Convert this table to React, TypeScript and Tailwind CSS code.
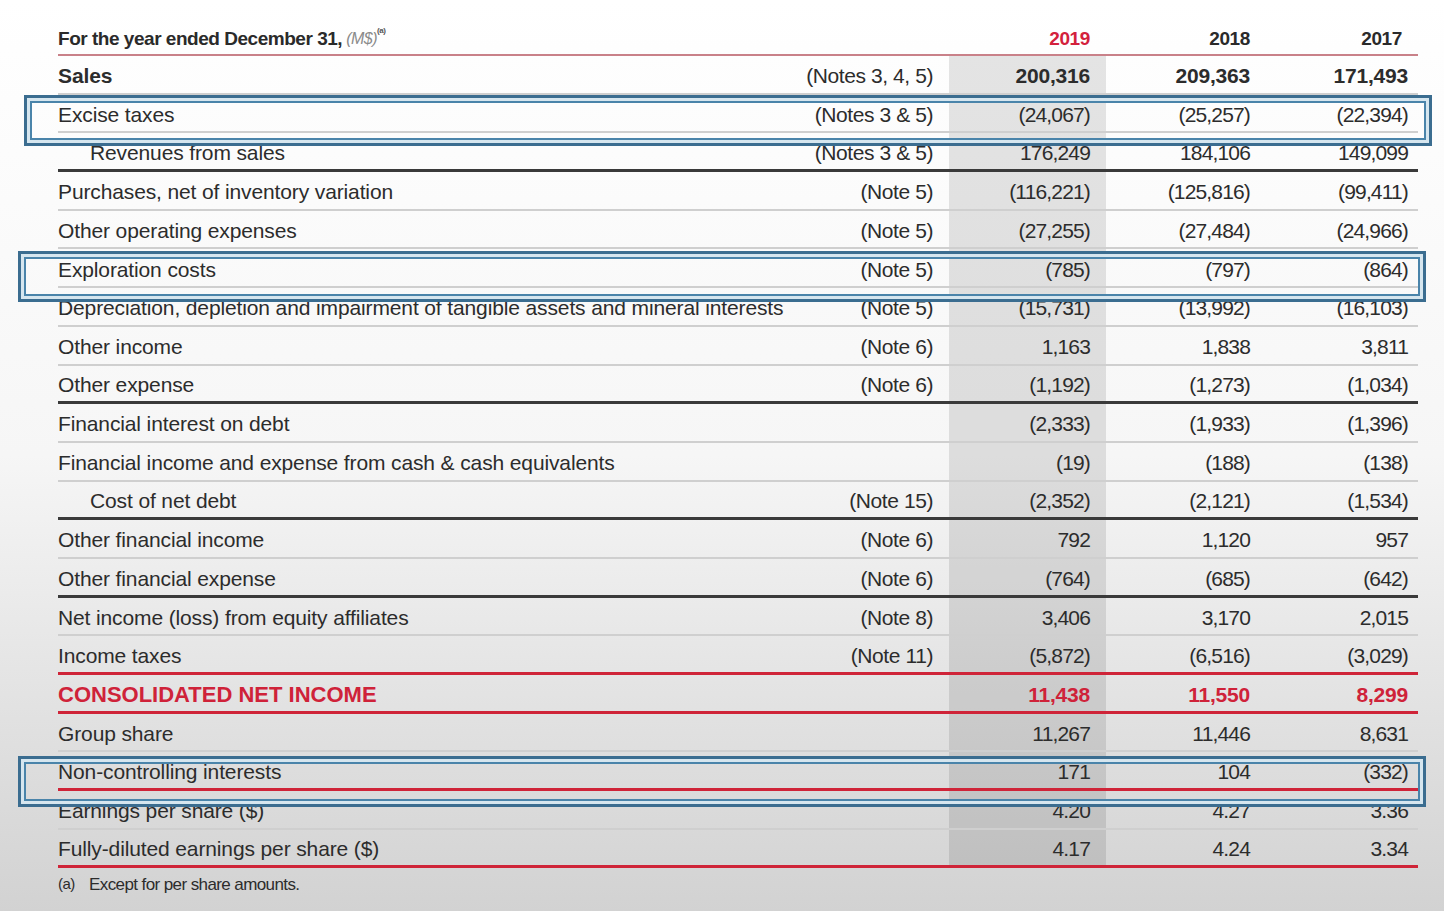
type Line = 'light' | 'dark' | 'red';

interface Row {
  label: string;
  note?: string;
  values: [string, string, string];
  line: Line;
  bold?: boolean;
  red?: boolean;
  indent?: boolean;
}

const ROWS: Row[] = [
  { label: 'Sales', note: '(Notes 3, 4, 5)', values: ['200,316', '209,363', '171,493'], line: 'light', bold: true },
  { label: 'Excise taxes', note: '(Notes 3 & 5)', values: ['(24,067)', '(25,257)', '(22,394)'], line: 'light' },
  { label: 'Revenues from sales', note: '(Notes 3 & 5)', values: ['176,249', '184,106', '149,099'], line: 'dark', indent: true },
  { label: 'Purchases, net of inventory variation', note: '(Note 5)', values: ['(116,221)', '(125,816)', '(99,411)'], line: 'light' },
  { label: 'Other operating expenses', note: '(Note 5)', values: ['(27,255)', '(27,484)', '(24,966)'], line: 'light' },
  { label: 'Exploration costs', note: '(Note 5)', values: ['(785)', '(797)', '(864)'], line: 'light' },
  {
    label: 'Depreciation, depletion and impairment of tangible assets and mineral interests',
    note: '(Note 5)',
    values: ['(15,731)', '(13,992)', '(16,103)'],
    line: 'light',
  },
  { label: 'Other income', note: '(Note 6)', values: ['1,163', '1,838', '3,811'], line: 'light' },
  { label: 'Other expense', note: '(Note 6)', values: ['(1,192)', '(1,273)', '(1,034)'], line: 'dark' },
  { label: 'Financial interest on debt', values: ['(2,333)', '(1,933)', '(1,396)'], line: 'light' },
  { label: 'Financial income and expense from cash & cash equivalents', values: ['(19)', '(188)', '(138)'], line: 'light' },
  { label: 'Cost of net debt', note: '(Note 15)', values: ['(2,352)', '(2,121)', '(1,534)'], line: 'dark', indent: true },
  { label: 'Other financial income', note: '(Note 6)', values: ['792', '1,120', '957'], line: 'light' },
  { label: 'Other financial expense', note: '(Note 6)', values: ['(764)', '(685)', '(642)'], line: 'dark' },
  { label: 'Net income (loss) from equity affiliates', note: '(Note 8)', values: ['3,406', '3,170', '2,015'], line: 'light' },
  { label: 'Income taxes', note: '(Note 11)', values: ['(5,872)', '(6,516)', '(3,029)'], line: 'red' },
  { label: 'CONSOLIDATED NET INCOME', values: ['11,438', '11,550', '8,299'], line: 'red', bold: true, red: true },
  { label: 'Group share', values: ['11,267', '11,446', '8,631'], line: 'light' },
  { label: 'Non-controlling interests', values: ['171', '104', '(332)'], line: 'red' },
  { label: 'Earnings per share ($)', values: ['4.20', '4.27', '3.36'], line: 'light' },
  { label: 'Fully-diluted earnings per share ($)', values: ['4.17', '4.24', '3.34'], line: 'red' },
];

const lineClass: Record<Line, string> = {
  light: 'border-b-2 border-[#cfcfcf]',
  dark: 'border-b-[3px] border-[#3a3a3a]',
  red: 'border-b-[3px] border-[#cf2438]',
};

const GRID = 'grid grid-cols-[731px_160px_157px_156px_156px]';

function HighlightBox({ className }: { className: string }) {
  return (
    <div className={`absolute border-[3px] border-[#3b6d90] ${className}`}>
      <div className="h-full w-full border-[3px] border-[#d6e6ef]">
        <div className="h-full w-full border-2 border-[#4a84aa]" />
      </div>
    </div>
  );
}

function TableRow({ row }: { row: Row }) {
  const text = row.red ? 'text-[#cf2239]' : 'text-[#2c2c2c]';
  const weight = row.bold ? 'font-bold' : 'font-normal';
  return (
    <div className={`${GRID} h-[38.7px] ${lineClass[row.line]}`}>
      <div
        className={`flex items-center whitespace-nowrap pt-[3px] ${row.indent ? 'pl-[32px]' : ''} ${
          row.red ? 'text-[22px] tracking-normal' : 'text-[21px] tracking-[-0.006em]'
        } ${text} ${weight}`}
      >
        {row.label}
      </div>
      <div className="flex items-center justify-end pr-4 pt-[3px] text-[21px] tracking-[-0.02em] text-[#2c2c2c]">
        {row.note}
      </div>
      {row.values.map((v, i) => (
        <div
          key={i}
          className={`flex items-center justify-end pt-[3px] text-[21px] ${text} ${weight} ${
            row.bold ? 'tracking-[-0.01em]' : 'tracking-[-0.04em]'
          } ${i === 0 ? 'bg-black/[0.1] pr-4' : i === 1 ? 'pr-3' : 'pr-[10px]'}`}
        >
          {v}
        </div>
      ))}
    </div>
  );
}

export default function App() {
  return (
    <div className="relative h-[911px] w-[1444px] overflow-hidden bg-linear-to-b from-white via-[#f6f6f6] to-[#d2d2d2] font-['Liberation_Sans',Arial,sans-serif]">
      <div className="ml-[58px] w-[1360px] pt-[21px]">
        <div className={`${GRID} h-[35px] border-b-2 border-[#c98189] pt-[3px] text-[19px] font-bold text-[#2a2a2a]`}>
          <div className="flex items-center whitespace-nowrap tracking-[-0.025em]">
            For the year ended December 31,
            <span className="ml-1 text-[16px] font-normal italic text-[#8a8a8a]">(M$)</span>
            <sup className="-mt-2 text-[8px] text-[#555]">(a)</sup>
          </div>
          <div />
          <div className="flex items-center justify-end pr-4 tracking-[-0.02em] text-[#d3213c]">2019</div>
          <div className="flex items-center justify-end pr-3 tracking-[-0.02em]">2018</div>
          <div className="flex items-center justify-end pr-4 tracking-[-0.02em]">2017</div>
        </div>

        {ROWS.map((row) => (
          <TableRow key={row.label} row={row} />
        ))}

        <div className="flex h-[32px] items-center text-[17px] tracking-[-0.035em] text-[#2c2c2c]">
          <span className="w-[31px] text-[15px]">(a)</span>
          <span>Except for per share amounts.</span>
        </div>
      </div>

      <HighlightBox className="left-[24px] top-[95px] h-[51px] w-[1408px]" />
      <HighlightBox className="left-[18px] top-[251px] h-[51px] w-[1408px]" />
      <HighlightBox className="left-[18px] top-[756px] h-[51px] w-[1408px]" />
    </div>
  );
}
